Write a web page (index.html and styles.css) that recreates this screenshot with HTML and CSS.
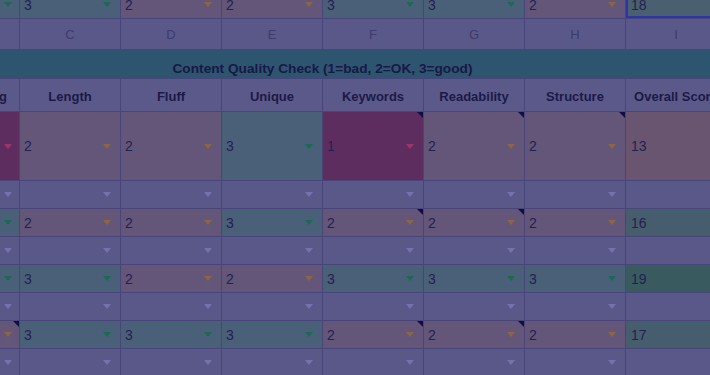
FILE: index.html
```html
<!DOCTYPE html>
<html>
<head>
<meta charset="utf-8">
<link rel="stylesheet" href="styles.css">
</head>
<body>
<div class="sheet">
  <!-- top partial row -->
  <div class="cell top g"><span></span><i class="arr"></i></div>
  <div class="cell top g"><span>3</span><i class="arr"></i></div>
  <div class="cell top p"><span>2</span><i class="arr"></i></div>
  <div class="cell top p"><span>2</span><i class="arr"></i></div>
  <div class="cell top g"><span>3</span><i class="arr"></i></div>
  <div class="cell top g"><span>3</span><i class="arr"></i></div>
  <div class="cell top p"><span>2</span><i class="arr"></i></div>
  <div class="cell top score sel"><span>18</span></div>

  <!-- column letters -->
  <div class="letter"></div>
  <div class="letter">C</div>
  <div class="letter">D</div>
  <div class="letter">E</div>
  <div class="letter">F</div>
  <div class="letter">G</div>
  <div class="letter">H</div>
  <div class="letter">I</div>

  <!-- title -->
  <div class="title">Content Quality Check (1=bad, 2=OK, 3=good)</div>

  <!-- headers -->
  <div class="head head-cut"><span>Rating</span></div>
  <div class="head">Length</div>
  <div class="head">Fluff</div>
  <div class="head">Unique</div>
  <div class="head">Keywords</div>
  <div class="head">Readability</div>
  <div class="head">Structure</div>
  <div class="head head-last">Overall Score</div>

  <!-- big row -->
  <div class="cell big r"><span></span><i class="arr"></i></div>
  <div class="cell big p"><span>2</span><i class="arr"></i></div>
  <div class="cell big p"><span>2</span><i class="arr"></i></div>
  <div class="cell big g"><span>3</span><i class="arr"></i></div>
  <div class="cell big r note"><span>1</span><i class="arr"></i></div>
  <div class="cell big p note"><span>2</span><i class="arr"></i></div>
  <div class="cell big p note"><span>2</span><i class="arr"></i></div>
  <div class="cell big score o"><span>13</span></div>

  <div class="cell e"><span></span><i class="arr"></i></div>
  <div class="cell e"><span></span><i class="arr"></i></div>
  <div class="cell e"><span></span><i class="arr"></i></div>
  <div class="cell e"><span></span><i class="arr"></i></div>
  <div class="cell e"><span></span><i class="arr"></i></div>
  <div class="cell e"><span></span><i class="arr"></i></div>
  <div class="cell e"><span></span><i class="arr"></i></div>
  <div class="cell e score"></div>

  <div class="cell g"><span></span><i class="arr"></i></div>
  <div class="cell p"><span>2</span><i class="arr"></i></div>
  <div class="cell p"><span>2</span><i class="arr"></i></div>
  <div class="cell g"><span>3</span><i class="arr"></i></div>
  <div class="cell p note"><span>2</span><i class="arr"></i></div>
  <div class="cell p note"><span>2</span><i class="arr"></i></div>
  <div class="cell p"><span>2</span><i class="arr"></i></div>
  <div class="cell score sg"><span>16</span></div>

  <div class="cell e"><span></span><i class="arr"></i></div>
  <div class="cell e"><span></span><i class="arr"></i></div>
  <div class="cell e"><span></span><i class="arr"></i></div>
  <div class="cell e"><span></span><i class="arr"></i></div>
  <div class="cell e"><span></span><i class="arr"></i></div>
  <div class="cell e"><span></span><i class="arr"></i></div>
  <div class="cell e"><span></span><i class="arr"></i></div>
  <div class="cell e score"></div>

  <div class="cell g"><span></span><i class="arr"></i></div>
  <div class="cell g"><span>3</span><i class="arr"></i></div>
  <div class="cell p"><span>2</span><i class="arr"></i></div>
  <div class="cell p"><span>2</span><i class="arr"></i></div>
  <div class="cell g"><span>3</span><i class="arr"></i></div>
  <div class="cell g"><span>3</span><i class="arr"></i></div>
  <div class="cell g"><span>3</span><i class="arr"></i></div>
  <div class="cell score sg2"><span>19</span></div>

  <div class="cell e"><span></span><i class="arr"></i></div>
  <div class="cell e"><span></span><i class="arr"></i></div>
  <div class="cell e"><span></span><i class="arr"></i></div>
  <div class="cell e"><span></span><i class="arr"></i></div>
  <div class="cell e"><span></span><i class="arr"></i></div>
  <div class="cell e"><span></span><i class="arr"></i></div>
  <div class="cell e"><span></span><i class="arr"></i></div>
  <div class="cell e score"></div>

  <div class="cell p note"><span></span><i class="arr"></i></div>
  <div class="cell g"><span>3</span><i class="arr"></i></div>
  <div class="cell g"><span>3</span><i class="arr"></i></div>
  <div class="cell g"><span>3</span><i class="arr"></i></div>
  <div class="cell p note"><span>2</span><i class="arr"></i></div>
  <div class="cell p note"><span>2</span><i class="arr"></i></div>
  <div class="cell p"><span>2</span><i class="arr"></i></div>
  <div class="cell score sg"><span>17</span></div>

  <div class="cell e"><span></span><i class="arr"></i></div>
  <div class="cell e"><span></span><i class="arr"></i></div>
  <div class="cell e"><span></span><i class="arr"></i></div>
  <div class="cell e"><span></span><i class="arr"></i></div>
  <div class="cell e"><span></span><i class="arr"></i></div>
  <div class="cell e"><span></span><i class="arr"></i></div>
  <div class="cell e"><span></span><i class="arr"></i></div>
  <div class="cell e score"></div>
</div>
</body>
</html>
```

FILE: styles.css
```css
html, body {
  margin: 0;
  padding: 0;
  width: 710px;
  height: 375px;
  overflow: hidden;
  background: #47457a;
  font-family: "Liberation Sans", Arial, sans-serif;
}

.sheet {
  display: grid;
  grid-template-columns: 19px repeat(7, 100px);
  grid-template-rows: 18px 30px 28px 32px 68px repeat(7, 27px);
  gap: 1px;
  background: #47457a;
  width: 726px;
}

.cell {
  position: relative;
  display: flex;
  align-items: center;
  justify-content: space-between;
  padding: 0 9px 0 4px;
  font-size: 14px;
  color: #23214f;
  background: #5a5889;
  overflow: hidden;
}

.cell.top {
  padding-bottom: 9px;
}

.arr {
  display: block;
  width: 0;
  height: 0;
  border-left: 4px solid transparent;
  border-right: 4px solid transparent;
  border-top: 5px solid #7472ad;
  flex: none;
}

.g { background: #4a6079; }
.g .arr { border-top-color: #1d6a52; }

.p { background: #645679; }
.p .arr { border-top-color: #8c6446; }

.r { background: #5e2d5f; }
.r .arr { border-top-color: #a03466; }

.e { background: #5a5889; }

.score { padding-left: 5px; }
.o { background: #6a5570; }
.sg { background: #455d6d; }
.sg2 { background: #395b60; }
.sel {
  background: #4a6071;
  box-shadow: inset 2px 0 0 #2a36a8, inset 0 -2px 0 #2a36a8;
}

.note::after {
  content: "";
  position: absolute;
  top: 0;
  right: 0;
  width: 0;
  height: 0;
  border-top: 6px solid #0f0d42;
  border-left: 6px solid transparent;
}

.letter {
  display: flex;
  align-items: center;
  justify-content: center;
  background: #5a5889;
  color: #3d3c6b;
  font-size: 13px;
}

.title {
  grid-column: 1 / -1;
  display: flex;
  align-items: center;
  justify-content: center;
  padding: 8px 101px 0 20px;
  background: #2d5570;
  color: #191846;
  font-size: 13.7px;
  font-weight: bold;
}

.head {
  display: flex;
  align-items: center;
  justify-content: center;
  padding-top: 2px;
  background: #5b598a;
  color: #1b1946;
  font-size: 13px;
  font-weight: bold;
  white-space: nowrap;
  overflow: hidden;
}

.head-cut {
  justify-content: flex-end;
  padding-right: 12px;
}
```
